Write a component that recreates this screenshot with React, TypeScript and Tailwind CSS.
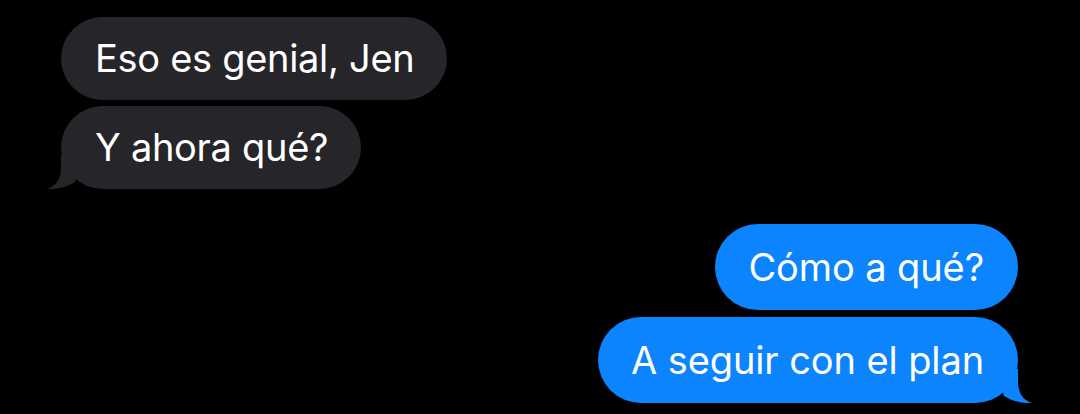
const font = { fontFamily: 'Inter, "Liberation Sans", sans-serif' }

function LeftTail() {
  return (
    <svg className="absolute -left-[14px] bottom-0 w-[36px] h-[34px]" viewBox="0 0 36 34">
      <path d="M14 0 L14 12 C14 24 9 31 0 34 C10 34.5 20 32 28 27 L36 0 Z" fill="#262529" />
    </svg>
  )
}

function RightTail() {
  return (
    <svg className="absolute -right-[14px] bottom-0 w-[36px] h-[34px]" viewBox="0 0 36 34">
      <path d="M22 0 L22 12 C22 24 27 31 36 34 C26 34.5 16 32 8 27 L0 0 Z" fill="#0b84fe" />
    </svg>
  )
}

function Incoming({ text, tail }: { text: string; tail?: boolean }) {
  return (
    <div className="relative self-start">
      {tail && <LeftTail />}
      <div className="relative flex items-center h-[83px] pl-[34px] pr-[33px] rounded-full bg-[#262529] text-white text-[38px] tracking-[-0.3px]">
        {text}
      </div>
    </div>
  )
}

function Outgoing({ text, tail }: { text: string; tail?: boolean }) {
  return (
    <div className="relative self-end">
      {tail && <RightTail />}
      <div className="relative flex items-center h-[86px] pl-[33px] pr-[34px] rounded-full bg-[#0b84fe] text-white text-[38px] tracking-[-0.1px]">
        {text}
      </div>
    </div>
  )
}

export default function App() {
  return (
    <div className="w-[1080px] h-[414px] bg-black overflow-hidden" style={font}>
      <div className="flex flex-col pt-[17px] pl-[61px] pr-[62px]">
        <div className="flex flex-col gap-[6px]">
          <Incoming text="Eso es genial, Jen" />
          <Incoming text="Y ahora qué?" tail />
        </div>
        <div className="flex flex-col gap-[7px] mt-[35px]">
          <Outgoing text="Cómo a qué?" />
          <Outgoing text="A seguir con el plan" tail />
        </div>
      </div>
    </div>
  )
}
